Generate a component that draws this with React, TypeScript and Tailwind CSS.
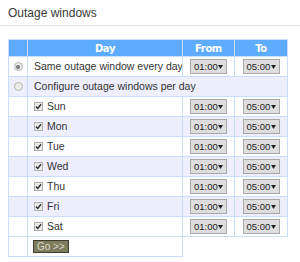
import React from 'react';

const days = ['Sun', 'Mon', 'Tue', 'Wed', 'Thu', 'Fri', 'Sat'];

function Select({ value }: { value: string }) {
  return (
    <div className="mx-auto flex h-[15px] w-[37px] items-center justify-between border border-[#a9a9a9] bg-[#dedede] pl-[3px] pr-[3px] text-[9.5px] leading-none text-[#222]">
      <span>{value}</span>
      <svg className="shrink-0" width="5" height="4" viewBox="0 0 5 4">
        <path d="M0 0h5L2.5 4z" fill="#222" />
      </svg>
    </div>
  );
}

function Radio({ checked }: { checked?: boolean }) {
  return (
    <div className="mx-auto flex h-[9px] w-[9px] items-center justify-center rounded-full border border-[#b5b5b5] bg-[#ececec]">
      {checked && <div className="h-[4px] w-[4px] rounded-full bg-[#777]" />}
    </div>
  );
}

function Checkbox() {
  return (
    <div className="flex h-[9px] w-[9px] shrink-0 items-center justify-center border border-[#b0b0b0] bg-[#ececec]">
      <svg width="7" height="7" viewBox="0 0 7 7">
        <path d="M1 3.6l1.8 1.8L6 1.2" stroke="#333" strokeWidth="1.5" fill="none" />
      </svg>
    </div>
  );
}

export default function App() {
  const cell = 'border border-[#c9defa] p-0 overflow-hidden whitespace-nowrap';
  return (
    <div className="h-[262px] w-[300px] bg-white font-['Liberation_Sans',Arial,sans-serif] text-[10.5px] text-[#333]">
      <div className="border-b border-[#e2e2e2] px-[8px] pt-[6px] pb-[5px] text-[12px] leading-[14px] text-[#3a3a3a]">
        Outage windows
      </div>
      <table className="ml-[8px] mt-[13px] w-[280px] table-fixed border-collapse">
        <colgroup>
          <col className="w-[19px]" />
          <col className="w-[155px]" />
          <col className="w-[52px]" />
          <col className="w-[53px]" />
        </colgroup>
        <thead>
          <tr className="h-[17px] bg-[#5eacff] font-['DejaVu_Sans',sans-serif] text-[10px] font-bold tracking-[-0.4px] text-white">
            <th className={cell}></th>
            <th className={cell}>Day</th>
            <th className={cell}>From</th>
            <th className={cell}>To</th>
          </tr>
        </thead>
        <tbody>
          <tr className="h-[20px] bg-white">
            <td className={cell}>
              <Radio checked />
            </td>
            <td className={`${cell} pl-[6px]`}>Same outage window every day</td>
            <td className={cell}>
              <Select value="01:00" />
            </td>
            <td className={cell}>
              <Select value="05:00" />
            </td>
          </tr>
          <tr className="h-[20px] bg-[#eeeefe]">
            <td className={cell}>
              <Radio />
            </td>
            <td className={`${cell} pl-[6px]`} colSpan={3}>
              Configure outage windows per day
            </td>
          </tr>
          {days.map((d, i) => (
            <tr key={d} className={`h-[20px] ${i % 2 === 1 ? 'bg-[#eeeefe]' : 'bg-white'}`}>
              <td className={cell}></td>
              <td className={`${cell} pl-[6px]`}>
                <div className="flex items-center gap-[4px]">
                  <Checkbox />
                  <span>{d}</span>
                </div>
              </td>
              <td className={cell}>
                <Select value="01:00" />
              </td>
              <td className={cell}>
                <Select value="05:00" />
              </td>
            </tr>
          ))}
          <tr className="h-[20px] bg-white">
            <td className={cell}></td>
            <td className={`${cell} pl-[5px]`}>
              <button className="block h-[13px] w-[36px] border border-[#3e3e2e] bg-[#7d7d5e] pl-[3px] text-left text-[10px] leading-none text-[#d8d8c8]">
                Go &gt;&gt;
              </button>
            </td>
          </tr>
        </tbody>
      </table>
    </div>
  );
}
